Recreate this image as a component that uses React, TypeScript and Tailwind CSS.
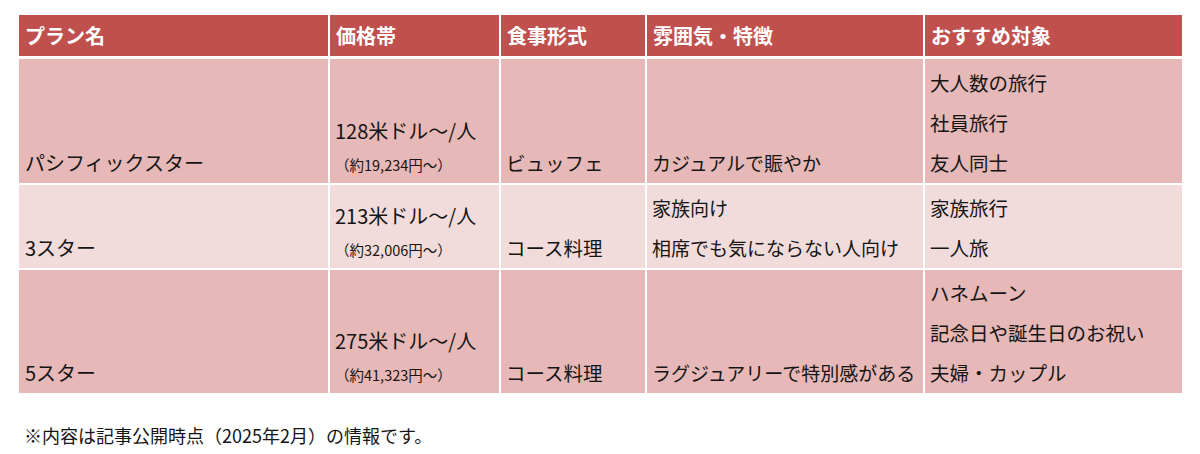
import React from "react";

const font = { fontFamily: '"Noto Sans CJK JP", "Noto Sans", sans-serif' };

type Row = {
  name: string;
  price: string;
  yen: string;
  meal: string;
  mood: string[];
  target: string[];
  bg: string;
  h: string;
};

const rows: Row[] = [
  {
    name: "パシフィックスター",
    price: "128米ドル～/人",
    yen: "（約19,234円～）",
    meal: "ビュッフェ",
    mood: ["カジュアルで賑やか"],
    target: ["大人数の旅行", "社員旅行", "友人同士"],
    bg: "bg-[#e6b8b7]",
    h: "h-[124px]",
  },
  {
    name: "3スター",
    price: "213米ドル～/人",
    yen: "（約32,006円～）",
    meal: "コース料理",
    mood: ["家族向け", "相席でも気にならない人向け"],
    target: ["家族旅行", "一人旅"],
    bg: "bg-[#f2dcdb]",
    h: "h-[83px]",
  },
  {
    name: "5スター",
    price: "275米ドル～/人",
    yen: "（約41,323円～）",
    meal: "コース料理",
    mood: ["ラグジュアリーで特別感がある"],
    target: ["ハネムーン", "記念日や誕生日のお祝い", "夫婦・カップル"],
    bg: "bg-[#e6b8b7]",
    h: "h-[123px]",
  },
];

const headers = ["プラン名", "価格帯", "食事形式", "雰囲気・特徴", "おすすめ対象"];

function Lines({ items }: { items: string[] }) {
  return (
    <>
      {items.map((t) => (
        <div key={t} className="leading-[40px] whitespace-nowrap">
          {t}
        </div>
      ))}
    </>
  );
}

export default function App() {
  return (
    <div className="w-[1200px] h-[454px] bg-white pt-[15px] pl-[19px]" style={font}>
      <div className="grid grid-cols-[309px_169px_144px_276px_257px] gap-x-[2px] gap-y-[2px] w-[1163px]">
        {headers.map((h) => (
          <div
            key={h}
            className="h-[41px] bg-[#c0504d] text-white font-bold text-[20px] flex items-center pl-[6px] mb-[1px]"
          >
            {h}
          </div>
        ))}
        {rows.map((r) => (
          <React.Fragment key={r.name}>
            <div className={`${r.bg} ${r.h} flex flex-col justify-end pl-[6px] text-[20px] text-[#151515]`}>
              <Lines items={[r.name]} />
            </div>
            <div className={`${r.bg} ${r.h} flex flex-col justify-end pl-[5px] text-[#151515]`}>
              <div className="text-[20px] leading-[32px] whitespace-nowrap">{r.price}</div>
              <div className="text-[14.5px] leading-[36px] whitespace-nowrap">{r.yen}</div>
            </div>
            <div className={`${r.bg} ${r.h} flex flex-col justify-end pl-[5px] text-[19.5px] text-[#151515]`}>
              <Lines items={[r.meal]} />
            </div>
            <div className={`${r.bg} ${r.h} flex flex-col justify-end pl-[5px] text-[19px] text-[#151515]`}>
              <Lines items={r.mood} />
            </div>
            <div className={`${r.bg} ${r.h} flex flex-col justify-end pl-[5px] text-[19.5px] text-[#151515]`}>
              <Lines items={r.target} />
            </div>
          </React.Fragment>
        ))}
      </div>
      <p className="mt-[29px] pl-[5px] text-[18px] leading-[26px] text-[#151515]">
        ※内容は記事公開時点（2025年2月）の情報です。
      </p>
    </div>
  );
}
